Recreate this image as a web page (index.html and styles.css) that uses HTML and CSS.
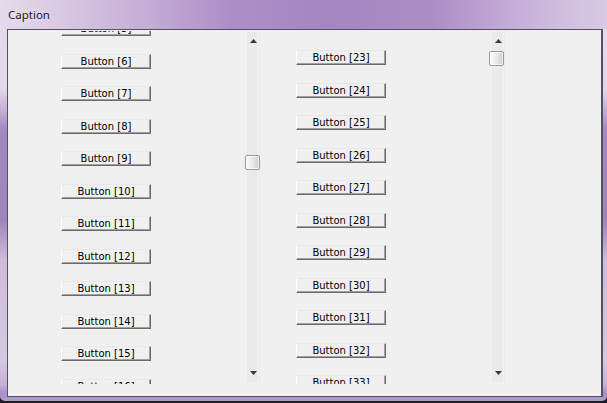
FILE: index.html
```html
<!DOCTYPE html>
<html>
<head>
<meta charset="utf-8">
<link rel="stylesheet" href="styles.css">
</head>
<body>
<div class="window">
  <div class="titlebar"><span class="caption">Caption</span></div>
  <div class="client">
    <div class="panel panel-left">
      <div class="list list-left">
        <div class="btn">Button [5]</div>
        <div class="btn">Button [6]</div>
        <div class="btn">Button [7]</div>
        <div class="btn">Button [8]</div>
        <div class="btn">Button [9]</div>
        <div class="btn">Button [10]</div>
        <div class="btn">Button [11]</div>
        <div class="btn">Button [12]</div>
        <div class="btn">Button [13]</div>
        <div class="btn">Button [14]</div>
        <div class="btn">Button [15]</div>
        <div class="btn">Button [16]</div>
      </div>
      <div class="sb">
        <div class="arrow"><svg width="7" height="4" viewBox="0 0 7 4"><polygon points="3.5,0 7,4 0,4" fill="#3a3a3a"/></svg></div>
        <div class="track"><div class="thumb thumb-left"></div></div>
        <div class="arrow"><svg width="7" height="4" viewBox="0 0 7 4"><polygon points="0,0 7,0 3.5,4" fill="#3a3a3a"/></svg></div>
      </div>
    </div>
    <div class="panel panel-right">
      <div class="list list-right">
        <div class="btn">Button [23]</div>
        <div class="btn">Button [24]</div>
        <div class="btn">Button [25]</div>
        <div class="btn">Button [26]</div>
        <div class="btn">Button [27]</div>
        <div class="btn">Button [28]</div>
        <div class="btn">Button [29]</div>
        <div class="btn">Button [30]</div>
        <div class="btn">Button [31]</div>
        <div class="btn">Button [32]</div>
        <div class="btn">Button [33]</div>
      </div>
      <div class="sb">
        <div class="arrow"><svg width="7" height="4" viewBox="0 0 7 4"><polygon points="3.5,0 7,4 0,4" fill="#3a3a3a"/></svg></div>
        <div class="track"><div class="thumb thumb-right"></div></div>
        <div class="arrow"><svg width="7" height="4" viewBox="0 0 7 4"><polygon points="0,0 7,0 3.5,4" fill="#3a3a3a"/></svg></div>
      </div>
    </div>
  </div>
</div>
</body>
</html>
```

FILE: styles.css
```css
html, body {
  margin: 0;
  padding: 0;
}
body {
  width: 607px;
  height: 403px;
  overflow: hidden;
  background: #1e1e22;
}
.window {
  width: 607px;
  height: 401px;
  display: flex;
  flex-direction: column;
  border-radius: 0 0 5px 5px;
  background:
    linear-gradient(180deg, rgba(0,0,0,0) 0%, rgba(0,0,0,0) 96%, #a98fc6 98%, #b49bcc 100%),
    linear-gradient(180deg, #e6dcec 0px, #e2d6ea 90px, #a488bf 130px, #9f84ba 220px, #cdbcda 260px, #d6c8e1 360px, #bca4d2 400px);
  box-sizing: border-box;
  overflow: hidden;
}
.titlebar {
  height: 29px;
  flex: none;
  display: flex;
  align-items: flex-start;
  background:
    linear-gradient(90deg, #e5dbec 0px, #d9c9e2 60px, #c4acd6 150px, #ac8fc8 230px, #a487c2 330px, #ab8dc6 430px, #c4acd8 510px, #d2c0e0 570px, #d8c9e4 607px);
}
.caption {
  font-family: "Noto Sans", sans-serif;
  font-size: 11.5px;
  color: #1a1a22;
  margin: 6px 0 0 8px;
  line-height: 18px;
  text-shadow: 0 0 6px rgba(255,255,255,0.8);
}
.client {
  margin: 0 4px 0 7px;
  height: 368px;
  flex: none;
  border: 1px solid #54505f;
  border-right-width: 2px;
  background: #f0f0f0;
  box-sizing: border-box;
  display: flex;
  align-items: flex-start;
  padding-top: 1px;
}
.panel {
  display: flex;
  height: 353px;
  align-items: flex-start;
}
.panel-left .list {
  width: 236px;
  padding-left: 53px;
}
.panel-right .list {
  width: 229px;
  padding-left: 36px;
}
.list {
  height: 353px;
  overflow: hidden;
  box-sizing: border-box;
  display: flex;
  flex-direction: column;
}
.list-left .btn:first-child {
  margin-top: -10px;
}
.list-right .btn:first-child {
  margin-top: 19px;
}
.btn {
  flex: none;
  width: 90px;
  height: 15px;
  margin-bottom: 17.5px;
  box-sizing: border-box;
  border: 1px solid;
  border-color: #e8e8e8 #6a6a6a #6a6a6a #ffffff;
  box-shadow: inset -1px -1px 0 #a0a0a0;
  background: #f0f0f0;
  font-family: "DejaVu Sans", sans-serif;
  font-size: 10px;
  line-height: 13px;
  color: #000;
  text-align: center;
  white-space: nowrap;
  overflow: hidden;
}
.sb {
  width: 16px;
  height: 350px;
  margin-top: 1px;
  display: flex;
  flex-direction: column;
  background: linear-gradient(90deg, #e4e4e4 0px, #f7f7f7 1px, #ebebeb 3px, #e9e9e9 13px, #f4f4f4 15px, #dedede 16px);
}
.arrow {
  height: 18px;
  flex: none;
  display: flex;
  align-items: center;
  justify-content: center;
}
.arrow svg {
  display: block;
  margin-left: 2px;
}
.track {
  flex: 1;
  display: flex;
  flex-direction: column;
}
.thumb {
  width: 15px;
  height: 15px;
  margin-left: 1px;
  box-sizing: border-box;
  border: 1px solid #9a9a9a;
  border-radius: 2px;
  background: linear-gradient(90deg, #fbfbfb 0%, #ececec 45%, #d9d9d9 80%, #cfcfcf 100%);
  box-shadow: inset 0 0 0 1px rgba(255,255,255,0.7);
}
.thumb-left {
  margin-top: 105px;
}
.thumb-right {
  margin-top: 1px;
  margin-left: 0;
}
```
